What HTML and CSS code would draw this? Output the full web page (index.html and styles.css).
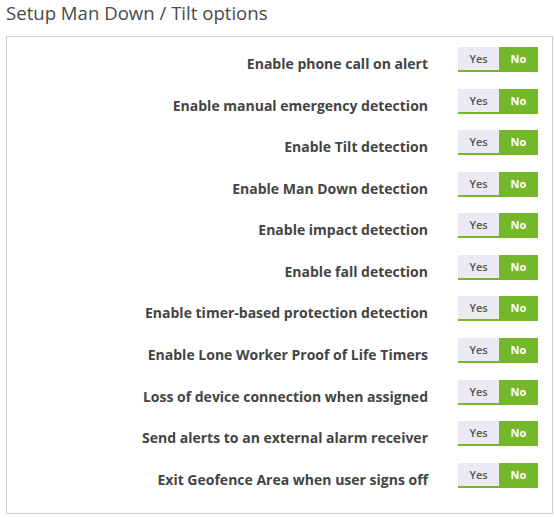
FILE: index.html
```html
<!DOCTYPE html>
<html>
<head>
<meta charset="utf-8">
<link rel="stylesheet" href="styles.css">
</head>
<body>
<h1 class="title">Setup Man Down / Tilt options</h1>
<div class="panel">
  <div class="row"><span class="label">Enable phone call on alert</span><div class="toggle"><span class="yes">Yes</span><span class="no">No</span></div></div>
  <div class="row"><span class="label">Enable manual emergency detection</span><div class="toggle"><span class="yes">Yes</span><span class="no">No</span></div></div>
  <div class="row"><span class="label">Enable Tilt detection</span><div class="toggle"><span class="yes">Yes</span><span class="no">No</span></div></div>
  <div class="row"><span class="label">Enable Man Down detection</span><div class="toggle"><span class="yes">Yes</span><span class="no">No</span></div></div>
  <div class="row"><span class="label">Enable impact detection</span><div class="toggle"><span class="yes">Yes</span><span class="no">No</span></div></div>
  <div class="row"><span class="label">Enable fall detection</span><div class="toggle"><span class="yes">Yes</span><span class="no">No</span></div></div>
  <div class="row"><span class="label">Enable timer-based protection detection</span><div class="toggle"><span class="yes">Yes</span><span class="no">No</span></div></div>
  <div class="row"><span class="label">Enable Lone Worker Proof of Life Timers</span><div class="toggle"><span class="yes">Yes</span><span class="no">No</span></div></div>
  <div class="row"><span class="label">Loss of device connection when assigned</span><div class="toggle"><span class="yes">Yes</span><span class="no">No</span></div></div>
  <div class="row"><span class="label">Send alerts to an external alarm receiver</span><div class="toggle"><span class="yes">Yes</span><span class="no">No</span></div></div>
  <div class="row"><span class="label">Exit Geofence Area when user signs off</span><div class="toggle"><span class="yes">Yes</span><span class="no">No</span></div></div>
</div>
</body>
</html>
```
FILE: styles.css
```css
html, body {
  margin: 0;
  padding: 0;
  background: #fff;
}
body {
  font-family: "Open Sans", "Liberation Sans", sans-serif;
  padding: 0 1px 0 6px;
}
.title {
  margin: 0;
  padding-top: 0;
  font-size: 18.6px;
  font-weight: 400;
  color: #4a4a4a;
  line-height: 25px;
  height: 36px;
}
.panel {
  border: 1px solid #cfcfcf;
  padding: 10px 14px 25px 0;
  box-sizing: border-box;
  height: 478px;
}
.row {
  display: flex;
  justify-content: flex-end;
  align-items: flex-start;
  height: 41.57px;
}
.label {
  font-size: 14px;
  font-weight: 700;
  color: #444;
  margin-right: 30px;
  margin-top: 7px;
  line-height: 20px;
}
.toggle {
  display: flex;
  height: 23px;
  border-bottom: 2px solid #74b72b;
  font-size: 11px;
  font-weight: 700;
  line-height: 23px;
}
.yes {
  width: 41px;
  text-align: center;
  background: #ebe9f2;
  color: #555;
  font-weight: 600;
}
.no {
  width: 39px;
  text-align: center;
  background: #74b72b;
  color: #fff;
}
```
